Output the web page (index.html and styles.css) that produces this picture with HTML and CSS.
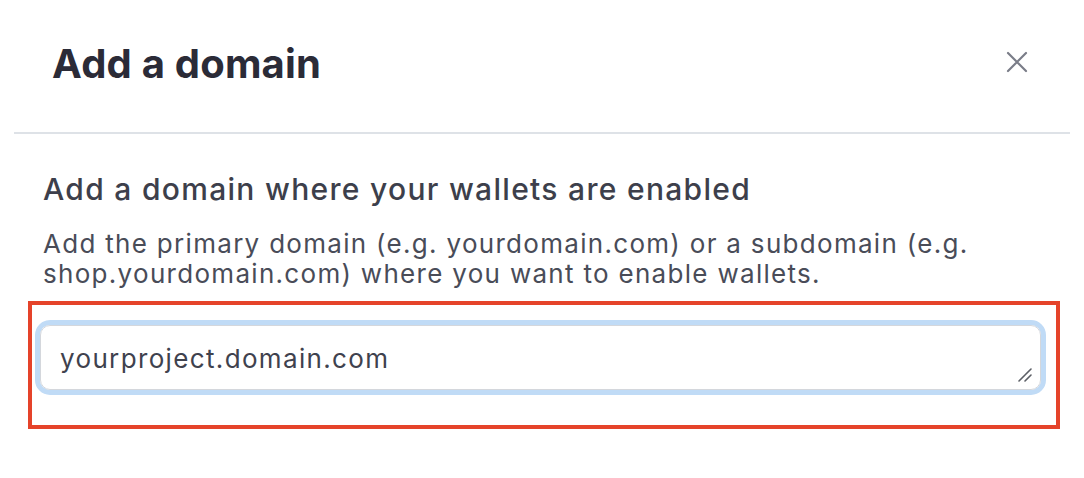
FILE: index.html
```html
<!DOCTYPE html>
<html lang="en">
<head>
<meta charset="utf-8">
<title>Add a domain</title>
<link rel="stylesheet" href="styles.css">
</head>
<body>
<div class="modal">
  <header class="modal-header">
    <h1 class="modal-title">Add a domain</h1>
    <button class="close-btn" aria-label="Close">
      <svg width="22" height="22" viewBox="0 0 22 22" fill="none" stroke="#7a7d88" stroke-width="2.2" stroke-linecap="round">
        <path d="M2 2 L20 20 M20 2 L2 20"/>
      </svg>
    </button>
  </header>
  <section class="modal-body">
    <h2 class="subtitle">Add a domain where your wallets are enabled</h2>
    <p class="desc">Add the primary domain (e.g. yourdomain.com) or a subdomain (e.g. shop.yourdomain.com) where you want to enable wallets.</p>
    <div class="highlight">
      <div class="field">
        <textarea class="input" rows="1">yourproject.domain.com</textarea>
        <svg class="grip" width="14" height="14" viewBox="0 0 14 14" fill="none" stroke="#5c5f66" stroke-width="1.6" stroke-linecap="round">
          <path d="M1 13 L13 1 M7 13 L13 7"/>
        </svg>
      </div>
    </div>
  </section>
</div>
</body>
</html>
```

FILE: styles.css
```css
html, body {
  margin: 0;
  padding: 0;
  background: #ffffff;
}

body {
  font-family: Inter, "Noto Sans", "Liberation Sans", sans-serif;
  color: #3f424e;
}

.modal {
  margin: 0 14px;
}

.modal-header {
  height: 134px;
  border-bottom: 2px solid #dee2e7;
  display: flex;
  align-items: center;
  justify-content: space-between;
  padding: 0 42px 8px 38px;
  box-sizing: border-box;
}

.modal-title {
  margin: 4px 0 0;
  font-size: 40px;
  font-weight: 700;
  letter-spacing: 0.2px;
  color: #2b2b37;
  line-height: 48px;
}

.close-btn {
  background: none;
  border: 0;
  padding: 0;
  width: 22px;
  height: 22px;
  display: flex;
  cursor: pointer;
}

.modal-body {
  padding: 36px 10px 0 29px;
}

.subtitle {
  margin: 0;
  font-size: 30px;
  font-weight: 500;
  line-height: 38px;
  color: #3d3f4b;
  letter-spacing: 1.3px;
}

.desc {
  margin: 21px 0 0;
  font-size: 26px;
  font-weight: 400;
  line-height: 30px;
  letter-spacing: 1.3px;
  color: #494c58;
  max-width: 1010px;
}

.highlight {
  margin: 12px 0 0 -15px;
  width: 1032px;
  box-sizing: border-box;
  border: 4px solid #e5432a;
  padding: 15px 10px 30px 3px;
}

.field {
  position: relative;
  border: 5px solid #c0dbf6;
  border-radius: 15px;
}

.input {
  display: block;
  width: 100%;
  box-sizing: border-box;
  border: 1px solid #d4d7dc;
  border-radius: 10px;
  height: 65px;
  padding: 18px 19px 15px;
  font-family: inherit;
  font-size: 26px;
  line-height: 30px;
  letter-spacing: 1.35px;
  color: #3f424e;
  resize: none;
  outline: none;
  overflow: hidden;
  background: #fff;
}

.grip {
  position: absolute;
  right: 9px;
  bottom: 8px;
}
```
